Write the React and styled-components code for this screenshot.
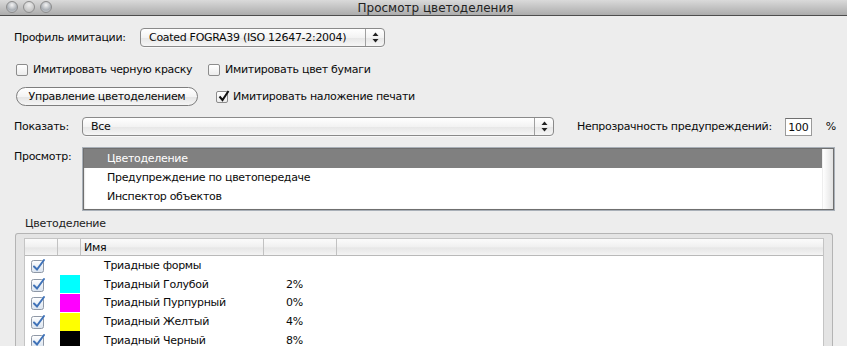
import styled, { createGlobalStyle } from 'styled-components';

const GlobalStyle = createGlobalStyle`
  html, body { margin: 0; padding: 0; background: #ededed; }
  body {
    font-family: "DejaVu Sans", "Liberation Sans", sans-serif;
    font-size: 11px;
    letter-spacing: -0.3px;
    color: #0a0a0a;
  }
`;

const Window = styled.div`
  width: 847px;
  height: 346px;
  overflow: hidden;
  background: #ededed;
`;

const TitleBar = styled.div`
  position: relative;
  height: 15px;
  border-bottom: 1px solid #4d4d4d;
  background: linear-gradient(to bottom, #dadada, #acacac);
  display: flex;
  align-items: center;
  justify-content: center;
  padding-left: 24px;
  font-size: 12px;
  letter-spacing: 0;
  color: #222;
`;

const Lights = styled.div`
  position: absolute;
  left: 6px;
  top: 1px;
  display: flex;
  gap: 5px;
`;

const Light = styled.span`
  width: 12px;
  height: 12px;
  border-radius: 50%;
  box-sizing: border-box;
  border: 1px solid #8d8d8d;
  background: ${p => p.$dim
    ? 'radial-gradient(circle at 50% 30%, #eeeeee, #c4c4c4 70%)'
    : 'radial-gradient(circle at 50% 30%, #f4f4f4, #a9aeb4 60%, #d6d9dd)'};
`;

const Content = styled.div`
  padding: 12px 13px 0 14px;
  display: flex;
  flex-direction: column;
`;

const Row = styled.div`
  display: flex;
  align-items: ${p => p.$top ? 'flex-start' : 'center'};
  height: ${p => p.$h}px;
  margin-top: ${p => p.$mt || 0}px;
`;

const Label = styled.span`
  width: ${p => p.$w ? `${p.$w}px` : 'auto'};
  flex-shrink: 0;
  white-space: nowrap;
  padding-top: ${p => p.$pt || 0}px;
`;

const Popup = styled.div`
  width: ${p => p.$w}px;
  flex-shrink: 0;
  height: 19px;
  box-sizing: border-box;
  border: 1px solid #8a8a8a;
  border-radius: 4px;
  background: linear-gradient(to bottom, #ffffff, #f3f3f3 50%, #e6e6e6 51%, #f6f6f6);
  display: flex;
  align-items: center;
  box-shadow: 0 1px 0 rgba(255,255,255,0.6);
  overflow: hidden;
`;

const PopupText = styled.span`
  flex: 1;
  padding-left: ${p => p.$pl || 8}px;
  white-space: nowrap;
`;

const PopupArrows = styled.span`
  width: 18px;
  height: 100%;
  border-left: 1px solid #a0a0a0;
  display: flex;
  align-items: center;
  justify-content: center;
`;

const CheckItem = styled.label`
  display: flex;
  align-items: center;
  gap: 5px;
  width: ${p => p.$w ? `${p.$w}px` : 'auto'};
  margin-left: ${p => p.$ml || 0}px;
  white-space: nowrap;
`;

const Box = styled.span`
  width: 12px;
  height: 12px;
  box-sizing: border-box;
  border: 1px solid #8c8c8c;
  border-radius: 2px;
  background: linear-gradient(to bottom, #ffffff, #ececec);
  position: relative;
  flex-shrink: 0;
`;

const Tick = styled.svg`
  position: absolute;
  left: 0px;
  top: -3px;
`;

const PillButton = styled.button`
  width: 182px;
  height: 19px;
  margin: 0 0 0 2px;
  padding: 0;
  border: 1px solid #7e7e7e;
  border-radius: 10px;
  background: linear-gradient(to bottom, #ffffff, #f4f4f4 50%, #e4e4e4 51%, #f5f5f5);
  font: inherit;
  letter-spacing: inherit;
  color: #0a0a0a;
`;

const Opacity = styled.div`
  display: flex;
  align-items: center;
  margin-left: 23px;
  white-space: nowrap;
`;

const NumBox = styled.span`
  width: 27px;
  height: 18px;
  box-sizing: border-box;
  margin-left: 13px;
  border: 1px solid #9a9a9a;
  border-top-color: #6f6f6f;
  background: #fff;
  display: flex;
  align-items: center;
  justify-content: center;
  padding-top: 2px;
`;

const Pct = styled.span`
  margin-left: 14px;
`;

const ListBox = styled.div`
  flex: 1;
  margin-left: 1px;
  height: 62px;
  box-sizing: border-box;
  border: 1px solid #6f6f6f;
  box-shadow: 0 0 0 1px #a9b0b8, inset 0 1px 2px rgba(0,0,0,0.3);
  background: #fff;
  display: flex;
`;

const ListItems = styled.div`
  flex: 1;
  display: flex;
  flex-direction: column;
`;

const ListItem = styled.div`
  height: 19px;
  display: flex;
  align-items: center;
  padding-left: 23px;
  background: ${p => p.$sel ? '#808080' : 'transparent'};
  color: ${p => p.$sel ? '#fff' : '#0a0a0a'};
`;

const Scroller = styled.div`
  width: 10px;
  background: linear-gradient(to right, #ffffff, #e2e2e2);
  border-left: 1px solid #eee;
`;

const SectionLabel = styled.div`
  margin: 7px 0 0 11px;
  height: 14px;
  line-height: 14px;
  color: #222;
`;

const Group = styled.div`
  margin: 2px 0 0 1px;
  width: 818px;
  height: 120px;
  box-sizing: border-box;
  border: 1px solid #b4b4b4;
  border-bottom: none;
  border-radius: 3px 3px 0 0;
  background: #e4e4e4;
  padding: 4px 8px 0 8px;
`;

const Table = styled.div`
  background: #fff;
  height: 100%;
  border-left: 1px solid #c4c4c4;
  border-right: 1px solid #c4c4c4;
  border-top: 1px solid #c4c4c4;
`;

const cols = [33, 23, 183, 73];

const HeaderRow = styled.div`
  display: flex;
  height: 16px;
  border-bottom: 1px solid #b9b9b9;
  background: linear-gradient(to bottom, #fbfbfb, #f0f0f0 50%, #e6e6e6 55%, #f4f4f4);
`;

const HeadCell = styled.div`
  width: ${p => p.$w ? `${p.$w}px` : 'auto'};
  flex: ${p => p.$w ? 'none' : 1};
  box-sizing: border-box;
  border-right: ${p => p.$w ? '1px solid #c2c2c2' : 'none'};
  padding-left: 3px;
  display: flex;
  align-items: center;
`;

const DataRow = styled.div`
  display: flex;
  height: 18.75px;
  align-items: center;
`;

const Cell = styled.div`
  width: ${p => p.$w}px;
  flex: none;
  box-sizing: border-box;
  padding-left: ${p => p.$pl || 0}px;
  display: flex;
  align-items: center;
  white-space: nowrap;
`;

const Swatch = styled.span`
  width: 20px;
  height: 18px;
  background: ${p => p.$c};
`;

const Arrows = () => (
  <svg width="7" height="11" viewBox="0 0 7 11">
    <path d="M3.5 0.5 L6.5 4 L0.5 4 Z" fill="#222" />
    <path d="M3.5 10.5 L6.5 7 L0.5 7 Z" fill="#222" />
  </svg>
);

const BlueCheck = () => (
  <svg width="15" height="15" viewBox="0 0 15 15">
    <defs>
      <linearGradient id="bx" x1="0" y1="0" x2="0" y2="1">
        <stop offset="0" stopColor="#ffffff" />
        <stop offset="1" stopColor="#d9e3ef" />
      </linearGradient>
    </defs>
    <rect x="0.5" y="2.5" width="12" height="12" rx="2" fill="url(#bx)" stroke="#8f98a6" />
    <path d="M3 8.5 L6 11.5 L13 2" fill="none" stroke="#3f72b8" strokeWidth="2" strokeLinecap="round" />
  </svg>
);

const inks = [
  { name: 'Триадные формы', color: null, pct: '' },
  { name: 'Триадный Голубой', color: '#00ffff', pct: '2%' },
  { name: 'Триадный Пурпурный', color: '#ff00ff', pct: '0%' },
  { name: 'Триадный Желтый', color: '#ffff00', pct: '4%' },
  { name: 'Триадный Черный', color: '#000000', pct: '8%' },
];

const App = () => {
  return (
    <Window>
      <GlobalStyle />
      <TitleBar>
        <Lights>
          <Light />
          <Light $dim />
          <Light />
        </Lights>
        Просмотр цветоделения
      </TitleBar>
      <Content>
        <Row $h={19}>
          <Label $w={126}>Профиль имитации:</Label>
          <Popup $w={245}>
            <PopupText>Coated FOGRA39 (ISO 12647-2:2004)</PopupText>
            <PopupArrows><Arrows /></PopupArrows>
          </Popup>
        </Row>

        <Row $h={15} $mt={15}>
          <CheckItem $w={192} $ml={2}>
            <Box />
            Имитировать черную краску
          </CheckItem>
          <CheckItem>
            <Box />
            Имитировать цвет бумаги
          </CheckItem>
        </Row>

        <Row $h={19} $mt={10}>
          <PillButton>Управление цветоделением</PillButton>
          <CheckItem $ml={18}>
            <Box>
              <Tick width="14" height="14" viewBox="0 0 14 14">
                <path d="M2.5 7.5 L5.5 11 L11.5 2" fill="none" stroke="#111" strokeWidth="2" />
              </Tick>
            </Box>
            Имитировать наложение печати
          </CheckItem>
        </Row>

        <Row $h={19} $mt={11}>
          <Label $w={68}>Показать:</Label>
          <Popup $w={472}>
            <PopupText>Все</PopupText>
            <PopupArrows><Arrows /></PopupArrows>
          </Popup>
          <Opacity>
            Непрозрачность предупреждений:
            <NumBox>100</NumBox>
            <Pct>%</Pct>
          </Opacity>
        </Row>

        <Row $h={62} $mt={12} $top>
          <Label $w={68} $pt={2}>Просмотр:</Label>
          <ListBox>
            <ListItems>
              <ListItem $sel>Цветоделение</ListItem>
              <ListItem>Предупреждение по цветопередаче</ListItem>
              <ListItem>Инспектор объектов</ListItem>
            </ListItems>
            <Scroller />
          </ListBox>
        </Row>

        <SectionLabel>Цветоделение</SectionLabel>
        <Group>
          <Table>
            <HeaderRow>
              <HeadCell $w={cols[0]} />
              <HeadCell $w={cols[1]} />
              <HeadCell $w={cols[2]}>Имя</HeadCell>
              <HeadCell $w={cols[3]} />
              <HeadCell />
            </HeaderRow>
            {inks.map(ink => (
              <DataRow key={ink.name}>
                <Cell $w={cols[0]} $pl={6}><BlueCheck /></Cell>
                <Cell $w={cols[1]} $pl={2}>
                  {ink.color && <Swatch $c={ink.color} />}
                </Cell>
                <Cell $w={cols[2]} $pl={23}>{ink.name}</Cell>
                <Cell $w={cols[3]} $pl={22}>{ink.pct}</Cell>
              </DataRow>
            ))}
          </Table>
        </Group>
      </Content>
    </Window>
  );
};

export default App;
